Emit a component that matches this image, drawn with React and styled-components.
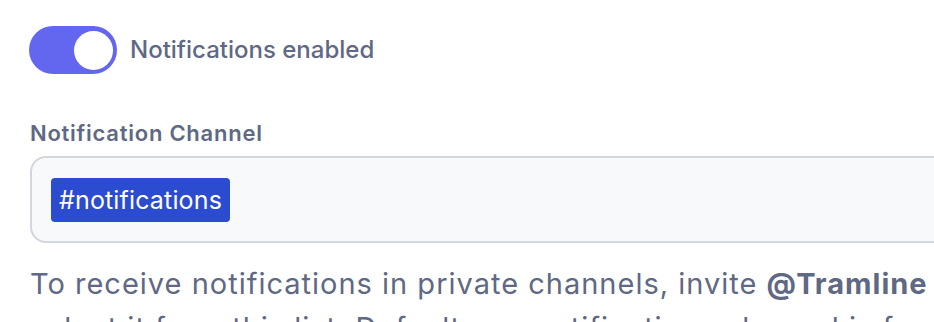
import React from "react";
import styled, { createGlobalStyle } from "styled-components";

const Global = createGlobalStyle`
  html, body { margin: 0; padding: 0; background: #ffffff; }
  body { font-family: Inter, "Noto Sans", sans-serif; overflow: hidden; }
`;

const Page = styled.div`
  width: 934px;
  height: 322px;
  overflow: hidden;
  padding: 26px 0 0 29px;
  box-sizing: border-box;
  display: flex;
  flex-direction: column;
  color: #5f6884;
`;

const ToggleRow = styled.div`
  display: flex;
  align-items: center;
  gap: 13px;
`;

const Track = styled.div`
  width: 88px;
  height: 48px;
  border-radius: 24px;
  background: ${(p) => (p.$on ? "#6366ee" : "#d1d5db")};
  display: flex;
  align-items: center;
  justify-content: ${(p) => (p.$on ? "flex-end" : "flex-start")};
  padding: 0 4px;
  box-sizing: border-box;
  flex-shrink: 0;
`;

const Knob = styled.div`
  width: 39px;
  height: 39px;
  border-radius: 50%;
  background: #ffffff;
`;

const ToggleLabel = styled.span`
  font-size: 24px;
  font-weight: 500;
  line-height: 30px;
`;

const Field = styled.div`
  margin-top: 47px;
  margin-left: 1px;
  display: flex;
  flex-direction: column;
`;

const Label = styled.label`
  font-size: 22px;
  font-weight: 600;
  line-height: 24px;
  letter-spacing: 0.75px;
`;

const InputBox = styled.div`
  margin-top: 11px;
  width: 960px;
  height: 87px;
  box-sizing: border-box;
  border: 2px solid #d3d6dc;
  border-radius: 16px;
  background: #f8f9fb;
  display: flex;
  align-items: center;
  padding-left: 19px;
`;

const Selected = styled.span`
  background: #2b4bd0;
  color: #ffffff;
  font-size: 25px;
  line-height: 44px;
  letter-spacing: 0.15px;
  padding: 0 8px;
  border-radius: 4px;
`;

const Help = styled.p`
  margin: 19px 0 0;
  font-size: 29px;
  line-height: 44px;
  letter-spacing: 1px;
  white-space: nowrap;
  width: 1200px;
  strong { font-weight: 700; }
`;

export default function App() {
  return (
    <>
      <Global />
      <Page>
        <ToggleRow>
          <Track $on>
            <Knob />
          </Track>
          <ToggleLabel>Notifications enabled</ToggleLabel>
        </ToggleRow>
        <Field>
          <Label>Notification Channel</Label>
          <InputBox>
            <Selected>#notifications</Selected>
          </InputBox>
          <Help>
            To receive notifications in private channels, invite <strong>@Tramline</strong> to the channel and
            <br />
            select it from this list. Default app notifications channel is for releases.
          </Help>
        </Field>
      </Page>
    </>
  );
}
